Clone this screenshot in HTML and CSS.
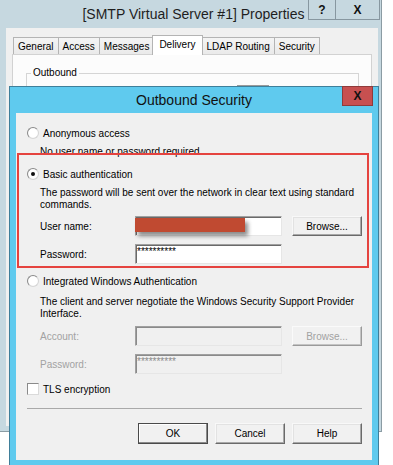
FILE: index.html
```html
<!DOCTYPE html>
<html lang="en">
<head>
    <meta charset="UTF-8">
    <meta name="viewport" content="width=device-width, initial-scale=1.0">
    <title>Outbound Security</title>
    <link rel="stylesheet" href="styles.css">
</head>
<body>
    <div class="props">
        <div class="props-bar">
            <span class="props-title">[SMTP Virtual Server #1] Properties</span>
            <span class="caption">
                <span class="cap cap-help">?</span>
                <span class="cap cap-close">X</span>
            </span>
        </div>
        <div class="props-client">
            <div class="tabs">
                <span class="tab">General</span>
                <span class="tab">Access</span>
                <span class="tab">Messages</span>
                <span class="tab tab-active">Delivery</span>
                <span class="tab">LDAP Routing</span>
                <span class="tab">Security</span>
            </div>
            <div class="tab-page">
                <fieldset class="group">
                    <legend>Outbound</legend>
                    <div class="peek"></div>
                </fieldset>
            </div>
        </div>
    </div>

    <div class="dialog">
        <div class="dialog-bar">
            <span class="dialog-title">Outbound Security</span>
            <span class="dialog-close">X</span>
        </div>
        <div class="dialog-body">
            <div class="opt"><span class="radio"></span>Anonymous access</div>
            <div class="hint">No user name or password required.</div>

            <div class="opt"><span class="radio checked"></span>Basic authentication</div>
            <div class="note">The password will be sent over the network in clear text using standard commands.</div>
            <div class="field">
                <span class="label">User name:</span>
                <span class="textbox"><span class="redact"></span></span>
                <span class="btn">Browse...</span>
            </div>
            <div class="field">
                <span class="label">Password:</span>
                <span class="textbox">**********</span>
            </div>

            <div class="opt"><span class="radio"></span>Integrated Windows Authentication</div>
            <div class="note">The client and server negotiate the Windows Security Support Provider Interface.</div>
            <div class="field disabled">
                <span class="label">Account:</span>
                <span class="textbox"></span>
                <span class="btn">Browse...</span>
            </div>
            <div class="field disabled">
                <span class="label">Password:</span>
                <span class="textbox">**********</span>
            </div>

            <div class="opt opt-check"><span class="checkbox"></span>TLS encryption</div>

            <div class="separator"></div>

            <div class="actions">
                <span class="btn btn-default">OK</span>
                <span class="btn">Cancel</span>
                <span class="btn">Help</span>
            </div>

            <div class="highlight"></div>
        </div>
    </div>
</body>
</html>
```

FILE: styles.css
```css
* {
    box-sizing: border-box;
}
body {
    margin: 0;
    width: 393px;
    height: 465px;
    overflow: hidden;
    position: relative;
    background-color: #fff;
    font-family: "Liberation Sans", Arial, sans-serif;
    font-size: 10px;
    color: #000;
}

/* parent properties window */
.props {
    width: 382px;
    height: 432px;
    background-color: #c6d8e0;
    border-right: 1px solid #8b9ca4;
    border-bottom: 1px solid #8b9ca4;
}
.props-bar {
    display: grid;
    grid-template-columns: 1fr auto 1fr;
    height: 28px;
}
.props-title {
    grid-column: 2;
    font-size: 14px;
    line-height: 28px;
    color: #1e1e1e;
    padding-left: 6px;
}
.caption {
    grid-column: 3;
    justify-self: end;
    align-self: start;
    display: flex;
    margin-top: -1px;
    margin-right: 1px;
}
.cap {
    height: 21px;
    border: 1px solid #8797a0;
    display: flex;
    align-items: center;
    justify-content: center;
    font-weight: bold;
    font-size: 12px;
    color: #111;
}
.cap-help {
    width: 28px;
}
.cap-close {
    width: 44px;
    border-left: none;
}
.props-client {
    margin: 0 3px 0 6px;
    height: 398px;
    background-color: #f0f0f0;
    padding: 9px 6px 0;
}
.tabs {
    display: flex;
    align-items: flex-end;
    height: 17px;
    padding-left: 1px;
    position: relative;
    z-index: 1;
}
.tab {
    height: 17px;
    padding: 1px 4px 0;
    margin-right: -1px;
    border: 1px solid #b4b4b4;
    border-bottom: none;
    background: linear-gradient(#f4f4f4, #eaeaea);
    line-height: 15px;
}
.tab-active {
    height: 20px;
    padding: 0 6px;
    margin: 0 -1px -1px -1px;
    background: #fff;
    line-height: 18px;
}
.tab-page {
    height: 375px;
    border: 1px solid #d2d2d2;
    background-color: #fcfcfc;
    padding: 0 12px 0 13px;
}
.group {
    margin: 12px 0 0;
    padding: 0;
    min-width: 0;
    height: 330px;
    border: 1px solid #d5d5d5;
}
.group legend {
    padding: 0 2px;
    margin-left: 4px;
    line-height: 12px;
}
.peek {
    margin: 6px 0 0 210px;
    width: 32px;
    height: 6px;
    border-top: 1px solid #9a9a9a;
}

/* outbound security dialog */
.dialog {
    position: absolute;
    left: 9px;
    top: 86px;
    width: 370px;
    background-color: #5fcaee;
    border: 1px solid #3f7f9a;
    padding: 0 6px 6px;
}
.dialog-bar {
    display: grid;
    grid-template-columns: 1fr auto 1fr;
    height: 26px;
    margin: 0 -6px;
}
.dialog-title {
    grid-column: 2;
    font-size: 14px;
    line-height: 26px;
    color: #111;
}
.dialog-close {
    grid-column: 3;
    justify-self: end;
    align-self: start;
    width: 31px;
    height: 20px;
    margin-top: -1px;
    margin-right: 5px;
    background-color: #c75050;
    border: 1px solid #8f3b3b;
    display: flex;
    align-items: center;
    justify-content: center;
    font-weight: bold;
    font-size: 12px;
    color: #111;
}
.dialog-body {
    position: relative;
    height: 347px;
    background-color: #f0f0f0;
    padding: 13px 10px 0 11px;
}
.opt {
    display: flex;
    align-items: center;
    height: 14px;
    margin-top: 10px;
}
.opt:first-child {
    margin-top: 0;
}
.hint + .opt {
    margin-top: 8px;
}
.opt-check {
    margin-top: 8px;
}
.radio {
    width: 12px;
    height: 12px;
    margin-right: 4px;
    border-radius: 50%;
    border: 1px solid #8a8a8a;
    border-right-color: #d6d6d6;
    border-bottom-color: #d6d6d6;
    background: radial-gradient(circle, #fff 55%, #ececec);
    display: flex;
    align-items: center;
    justify-content: center;
}
.radio.checked::after {
    content: "";
    width: 4px;
    height: 4px;
    border-radius: 50%;
    background-color: #111;
}
.checkbox {
    width: 12px;
    height: 12px;
    margin-right: 4px;
    border: 1px solid #8a8a8a;
    border-right-color: #dadada;
    border-bottom-color: #dadada;
    background-color: #fff;
}
.hint {
    margin-top: 5px;
    padding-left: 13px;
    line-height: 14px;
}
.note {
    margin-top: 6px;
    padding-left: 13px;
    padding-right: 4px;
    line-height: 12px;
}
.field + .opt + .note {
    margin-top: 8px;
}
.field {
    display: flex;
    align-items: center;
    height: 20px;
    margin-top: 8px;
    padding-left: 13px;
}
.note + .field {
    margin-top: 5px;
}
.opt + .note + .field.disabled {
    margin-top: 6px;
}
.label {
    width: 95px;
}
.textbox {
    position: relative;
    width: 147px;
    height: 20px;
    padding: 0 1px;
    line-height: 14px;
    background-color: #fff;
    border: 1px solid #a0a0a0;
    border-right-color: #e6e6e6;
    border-bottom-color: #e6e6e6;
    box-shadow: inset 1px 1px 0 #6a6a6a;
    color: #000;
}
.redact {
    position: absolute;
    left: -1px;
    top: 1px;
    width: 110px;
    height: 14px;
    background-color: #c04a31;
    box-shadow: 3px 4px 4px rgba(0, 0, 0, 0.45);
}
.btn {
    width: 70px;
    height: 20px;
    display: flex;
    align-items: center;
    justify-content: center;
    background-color: #f1f1f1;
    border: 1px solid;
    border-color: #f8f8f8 #6a6a6a #6a6a6a #f8f8f8;
    box-shadow: inset -1px -1px 0 #a8a8a8, inset 1px 1px 0 #e2e2e2;
}
.field .btn {
    margin-left: 10px;
}
.btn-default {
    border-color: #4a4a4a;
    box-shadow: inset -1px -1px 0 #8a8a8a, inset 1px 1px 0 #fff;
}
.disabled .label,
.disabled .btn {
    color: #a2a2a2;
}
.disabled .textbox {
    background-color: #f0f0f0;
    color: #8a8a8a;
    box-shadow: inset 1px 1px 0 #8a8a8a;
}
.disabled .btn {
    border-color: #fafafa #9a9a9a #9a9a9a #fafafa;
    box-shadow: inset -1px -1px 0 #c4c4c4;
}
.separator {
    margin-top: 12px;
    height: 1px;
    background-color: #a9a9a9;
}
.actions {
    display: flex;
    justify-content: flex-end;
    gap: 7px;
    margin-top: 14px;
}
.actions .btn {
    height: 21px;
}
.highlight {
    position: absolute;
    left: 1px;
    top: 40px;
    width: 352px;
    height: 115px;
    border: 2px solid #e5433f;
}
```
